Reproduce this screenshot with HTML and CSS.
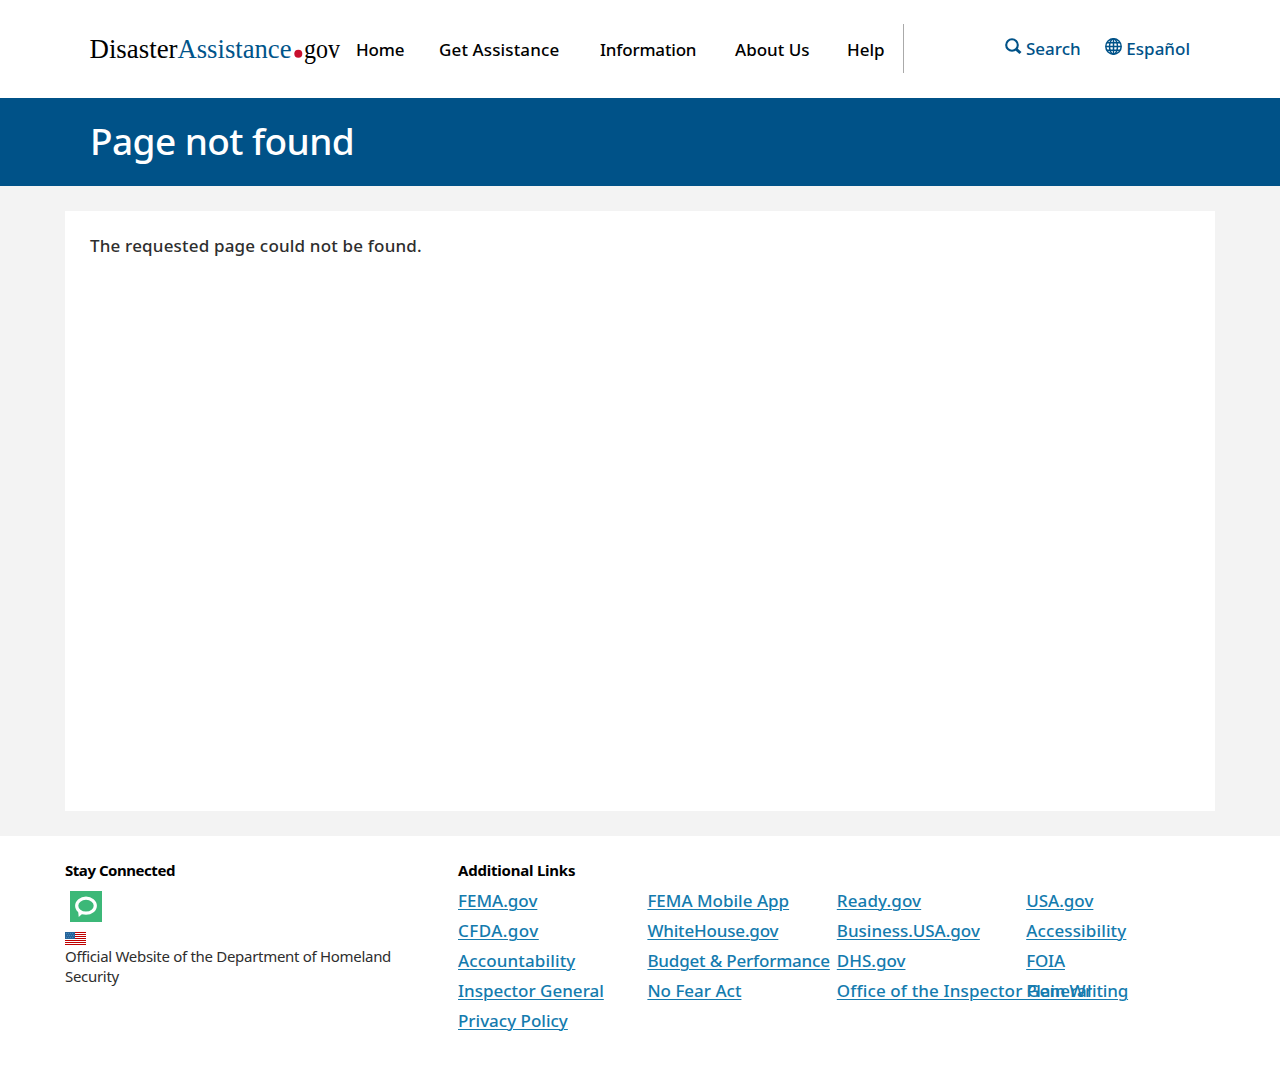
FILE: index.html
```html
<!DOCTYPE html>
<html lang="en">
<head>
<meta charset="utf-8">
<title>Page not found | DisasterAssistance.gov</title>
<link rel="stylesheet" href="styles.css">
</head>
<body>
<header class="header">
  <a class="logo" href="#" aria-label="DisasterAssistance.gov">
    <svg width="252" height="38" viewBox="0 0 252 38">
      <text class="logo-text" x="-.5" y="24.500" textLength="88" lengthAdjust="spacingAndGlyphs">Disaster</text>
      <text class="logo-text logo-blue" x="87.500" y="24.500" textLength="114" lengthAdjust="spacingAndGlyphs">Assistance</text>
      <circle cx="208.300" cy="20.800" r="4" fill="#c8102e"/>
      <text class="logo-text" x="214" y="24.500" textLength="36" lengthAdjust="spacingAndGlyphs">gov</text>
    </svg>
  </a>
  <nav class="nav">
    <a class="tight" href="#">Home</a><a class="loose" href="#">Get Assistance</a><a class="tight" href="#">Information</a><a href="#">About Us</a><a href="#">Help</a>
  </nav>
  <div class="tools">
    <a href="#"><svg width="17" height="17" viewBox="0 0 17 17" fill="none" stroke="currentColor"><circle cx="7" cy="7" r="5.800" stroke-width="2.100"/><path d="M11 11l4.500 4" stroke-width="3"/></svg><span>Search</span></a>
    <a href="#"><svg width="17" height="17" viewBox="0 0 17 17" fill="none" stroke="currentColor" stroke-width="1.500"><circle cx="8.500" cy="8.500" r="7.700"/><ellipse cx="8.500" cy="8.500" rx="4" ry="7.700"/><path d="M8.500 1v15M1 8.500h15M2 4.700h13M2 12.300h13"/></svg><span>Español</span></a>
  </div>
</header>
<div class="banner"><h1>Page not found</h1></div>
<main class="main"><div class="content"><p>The requested page could not be found.</p></div></main>
<footer class="footer">
  <section class="connect">
    <h2>Stay Connected</h2>
    <a class="social" href="#" aria-label="GovDelivery"><svg width="32" height="31" viewBox="0 0 32 31"><path fill="#3cb878" d="M0 0h32v31H0z"/><ellipse cx="16" cy="14.700" rx="9.300" ry="7.500" fill="none" stroke="#fff" stroke-width="3.200"/><path fill="#fff" d="M8 18.500l.700 7.500 4.500-4z"/></svg></a>
    <svg class="flag" width="21" height="13" viewBox="0 0 21 13"><path fill="#fff" d="M0 0h21v13H0z"/><path stroke="#c00000" d="M0 .5h21M0 2.500h21M0 4.500h21M0 6.500h21M0 8.500h21M0 10.500h21M0 12.500h21"/><path fill="#27659b" d="M0 0h10v7H0z"/><path stroke="#4785b5" stroke-dasharray="1 1" d="M1 1.500h8M2 3.500h7M1 5.500h8"/></svg>
    <p>Official Website of the Department of Homeland Security</p>
  </section>
  <section class="additional">
    <h2>Additional Links</h2>
    <div class="links">
      <a href="#">FEMA.gov</a><a href="#">FEMA Mobile App</a><a class="loose" href="#">Ready.gov</a><a href="#">USA.gov</a>
      <a class="looser" href="#">CFDA.gov</a><a class="tight" href="#">WhiteHouse.gov</a><a href="#">Business.USA.gov</a><a class="loose" href="#">Accessibility</a>
      <a class="loose" href="#">Accountability</a><a class="tight" href="#">Budget &amp; Performance</a><a href="#">DHS.gov</a><a class="tight" href="#">FOIA</a>
      <a href="#">Inspector General</a><a href="#">No Fear Act</a><a class="long" href="#">Office of the Inspector General</a><a class="tight" href="#">Plain Writing</a>
      <a href="#">Privacy Policy</a>
    </div>
  </section>
</footer>
</body>
</html>
```
FILE: styles.css
```css
* { box-sizing: border-box; }
body { margin: 0; background: #fff; color: #2e2e2e; font: 500 17px/24px "Noto Sans", "Open Sans", sans-serif; }
h1, h2, p { margin: 0; }
a { color: inherit; text-decoration: none; }
svg { display: block; overflow: visible; }
.tight { letter-spacing: -.18px; }
.loose { letter-spacing: .13px; }
.looser { letter-spacing: .45px; }
.long { letter-spacing: .14px; }
.header { display: flex; height: 98px; padding: 24px 90px 0; }
.logo { width: 266px; padding-top: 9px; }
.logo-text { font: 28px "Liberation Serif", serif; fill: #000; }
.logo-text.logo-blue { fill: #00548a; }
.nav { display: grid; grid-template-columns: 83px 161px 135px 112px 56px; width: 548px; height: 49px; padding-top: 14px; border-right: 1px solid #aaa; color: #000; white-space: nowrap; }
.tools { display: flex; justify-content: space-between; flex: 1; margin-left: 101px; padding-top: 13px; color: #005288; white-space: nowrap; }
.tools a { display: flex; height: 24px; gap: 4px; }
.tools svg { margin-top: 1px; }
.banner { height: 88px; padding: 18px 90px; background: #005288; color: #fff; }
h1 { font-size: 37px; line-height: 50px; font-weight: 500; letter-spacing: -.58px; }
.main { padding: 25px 65px; background: #f3f3f3; }
.content { height: 600px; padding: 23px 25px; background: #fff; letter-spacing: .18px; }
.footer { display: flex; padding: 24px 65px 0; }
h2 { color: #000; font-size: 15px; line-height: 20px; font-weight: 700; letter-spacing: -.22px; }
.connect { width: 393px; }
.connect h2 { letter-spacing: -.46px; }
.connect p { width: 340px; font-size: 15px; line-height: 20px; font-weight: 400; letter-spacing: -.3px; }
.social { display: block; width: 32px; margin: 11px 5px 10px; }
.flag { margin-bottom: 1px; }
.additional { width: 757px; }
.links { display: grid; grid-template-columns: repeat(4, 189.400px); grid-auto-rows: 30px; padding-top: 9px; color: #147bae; white-space: nowrap; }
.links a { width: max-content; height: 24px; text-decoration: underline; text-decoration-thickness: 1px; text-underline-offset: 2px; }
```
